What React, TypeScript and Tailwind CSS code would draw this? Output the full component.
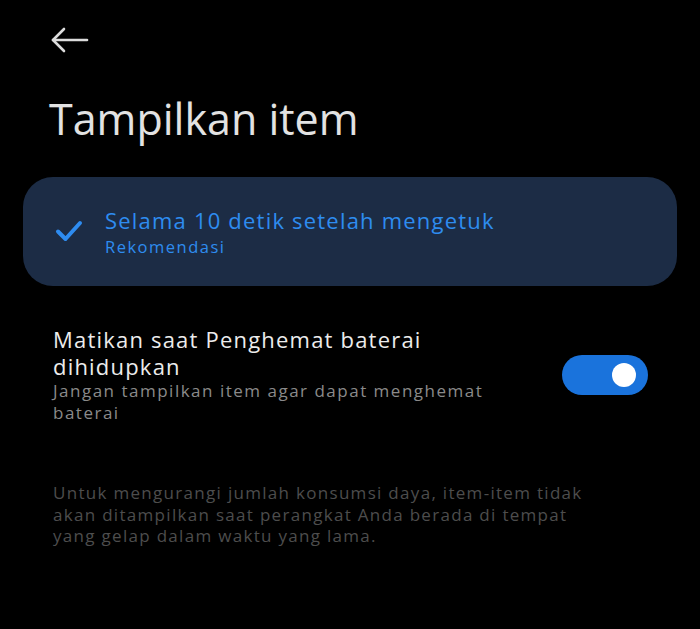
import React from "react";

const font = { fontFamily: "'Open Sans', 'Noto Sans', sans-serif" };

function BackArrow() {
  return (
    <svg width="38" height="26" viewBox="0 0 38 26" fill="none" stroke="#dcdcdc" strokeWidth="2.6" strokeLinecap="round" strokeLinejoin="round">
      <path d="M2 13 H36" />
      <path d="M13 2 L2 13 L13 24" />
    </svg>
  );
}

function Check() {
  return (
    <svg width="28" height="24" viewBox="0 0 28 24" fill="none" stroke="#2e8cf0" strokeWidth="4" strokeLinecap="round" strokeLinejoin="round">
      <path d="M3 12.5 L10.5 20 L25 4" />
    </svg>
  );
}

function Toggle() {
  return (
    <div className="w-[86px] h-[40px] rounded-full bg-[#1a73dc] flex items-center justify-end pr-[12px] shrink-0">
      <div className="w-[24px] h-[24px] rounded-full bg-white" />
    </div>
  );
}

export default function App() {
  return (
    <div className="w-[700px] h-[629px] bg-black overflow-hidden flex flex-col" style={font}>
      <div className="pt-[27px] pl-[51px] h-[60px]">
        <BackArrow />
      </div>
      <h1 className="pl-[49px] mt-[33px] text-[43px] leading-[52px] text-[#e2e2e2] font-normal">
        Tampilkan item
      </h1>
      <div className="mx-[23px] mt-[32px] h-[109px] rounded-[30px] bg-[#1c2c45] flex items-center pl-[32px] pb-[1px]">
        <Check />
        <div className="ml-[22px] flex flex-col">
          <span className="text-[22px] leading-[30px] text-[#2e8cf0] tracking-[1.2px]">Selama 10 detik setelah mengetuk</span>
          <span className="text-[16.5px] leading-[23px] text-[#2e8cf0] tracking-[1.5px]">Rekomendasi</span>
        </div>
      </div>
      <div className="mt-[40px] pl-[53px] pr-[52px] flex items-center">
        <div className="flex flex-col w-[440px]">
          <span className="text-[22px] leading-[27px] text-[#ececec] tracking-[1.2px]">
            Matikan saat Penghemat baterai dihidupkan
          </span>
          <span className="text-[17px] leading-[22px] text-[#8a8a8a] tracking-[1.5px]">
            Jangan tampilkan item agar dapat menghemat baterai
          </span>
        </div>
        <div className="flex-1" />
        <Toggle />
      </div>
      <p className="mt-[58px] pl-[53px] w-[601px] text-[17px] leading-[21.5px] text-[#4d4d4d] tracking-[1.3px]">
        Untuk mengurangi jumlah konsumsi daya, item-item tidak akan ditampilkan saat perangkat Anda berada di tempat yang gelap dalam waktu yang lama.
      </p>
    </div>
  );
}
